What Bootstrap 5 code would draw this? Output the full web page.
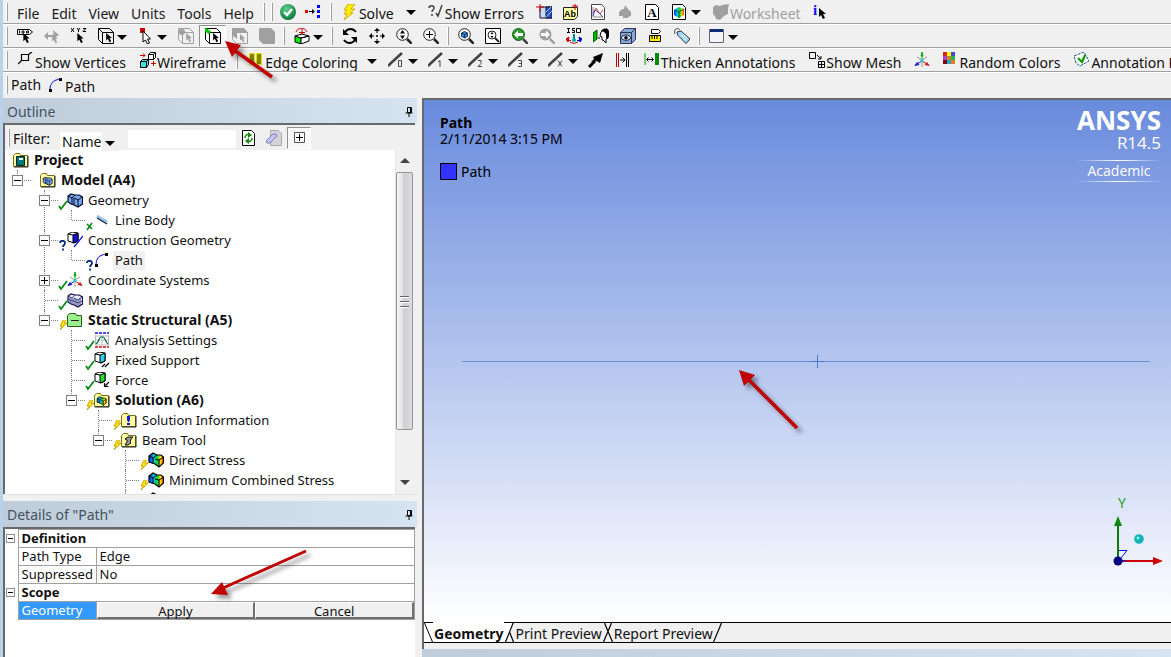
<!DOCTYPE html>
<html lang="en">
<head>
<meta charset="utf-8">
<meta name="viewport" content="width=device-width, initial-scale=1">
<title>Mechanical - Static Structural</title>
<link rel="stylesheet" href="https://cdn.jsdelivr.net/npm/bootstrap@5.3.0/dist/css/bootstrap.min.css">
<style>
  body{font-family:"Noto Sans","Open Sans",sans-serif;font-size:14px;line-height:20px;color:#111;background:#f0f0f0;}
  button,select,input{font:inherit;color:inherit;}
  .app{border-left:3px solid #b9d1ea;}
  svg{display:block;flex:none;}
  .i16{width:16px;height:16px;overflow:visible;}

  /* toolbars */
  .bar{height:24px;border-bottom:1px solid #a0a0a0;border-top:1px solid #fff;white-space:nowrap;}
  .bar-first{border-top:0;}
  .bar-last{height:26px;border-bottom:0;padding-bottom:2px;}
  .grip{width:8px;flex:none;height:18px;padding-left:3px;}
  .grip::before,.rule::before{content:"";display:block;width:2px;height:100%;border-right:1px solid #a0a0a0;border-left:1px solid #fff;}
  .rule{width:8px;flex:none;height:18px;padding-left:3px;}
  .menu-item{padding:4px 6px 0;color:#1a1a1a;text-decoration:none;}
  .tool,.tool-label,.drop{border:0;background:none;padding:0;flex:none;display:flex;align-items:center;height:22px;}
  .tool{width:27px;justify-content:center;}
  .tool-sm{width:24px;}
  .tool-label{padding:0 7px;gap:1px;}
  .tool-label span{padding-top:5px;}
  .tool:disabled,.tool-label:disabled{color:#a0a0a0;}
  .drop{width:16px;margin-left:-3px;padding-left:1px;padding-top:2px;}
  .drop-label{width:18px;margin-left:0;padding-left:2px;}
  .drop-wide{width:20px;margin-left:0;padding-left:5px;}
  .drop::before{content:"";border:5px solid transparent;border-top-color:#000;border-bottom:0;}
  .pressed{background:#f8f8f8;border:1px solid #fff;border-top-color:#909090;border-left-color:#909090;}

  /* docked panels */
  .side{width:414px;flex:none;gap:6px;}
  .dock{background:#fff;border-right:2px solid #f0f0f0;}
  .dock-title{height:26px;background:linear-gradient(90deg,#bfcddb,#d6e4f1);color:#46525e;padding:4px 3px 0 4px;margin-right:-2px;}
  .dock-title h2{font-size:14px;line-height:20px;font-weight:400;margin:0;}
  .dock-body{border-top:2px solid #696969;border-left:2px solid #696969;min-height:0;}
  .outline-dock{flex:1 1 0;min-height:0;border-bottom:1px solid #e3e3e3;}
  .details-dock{height:156px;flex:none;}
  .filter{height:25px;background:#f0f0f0;flex:none;}
  .filter label{width:47px;padding-top:3px;}
  .filter-select{appearance:none;border:0;border-radius:0;width:59px;height:19px;padding:0 0 0 2px;line-height:19px;
    background:#fff linear-gradient(#f0f0f0,#f0f0f0) right/17px 100% no-repeat;}
  .select-wrap{position:relative;margin-top:8px;}
  .select-wrap::after{content:"";position:absolute;right:4px;top:9px;border:5px solid transparent;border-top-color:#000;border-bottom:0;pointer-events:none;}
  .filter-input{width:108px;height:18px;border:0;margin:3px 0 0 9px;}

  .tree,.tree ul{list-style:none;margin:0;padding:0;}
  .tree ul{padding-left:27px;}
  .tree{padding-left:8px;font-size:13px;white-space:nowrap;}
  .tree li{position:relative;}
  .tree ul>li::before{content:"";position:absolute;left:-23px;top:0;bottom:0;border-left:1px dotted #808080;}
  .tree ul>li:last-child::before{bottom:auto;height:10px;}
  .tree ul>li>.node::before{content:"";position:absolute;left:-22px;top:10px;width:13px;border-top:1px dotted #808080;}
  .node{display:flex;align-items:center;height:20px;gap:5px;}
  .node b{font-size:14px;}
  .picked{background:#f0f0f0;padding:0 2px;margin-left:-2px;line-height:19px;}
  .twist{position:absolute;left:-28px;top:5px;width:11px;height:11px;padding:0;border:1px solid #808080;background:#fff;z-index:1;}
  .twist::before{content:"";position:absolute;left:1px;right:1px;top:4px;height:1px;background:#000;}
  .twist-plus::after{content:"";position:absolute;top:1px;bottom:1px;left:4px;width:1px;background:#000;}
  .pic{position:relative;}
  .state{position:absolute;left:-9px;bottom:-3px;width:10px;height:11px;overflow:visible;}

  .scroller{width:20px;padding-right:2px;flex:none;background:#f0f0f0;border-left:1px solid #e3e3e3;}
  .scroller button{border:0;background:none;height:22px;padding:0;display:flex;align-items:center;justify-content:center;}
  .thumb{height:75%;border:1px solid #979797;border-radius:2px;background:linear-gradient(90deg,#f5f5f5,#e6e6e8 35%,#cfcfd3 45%,#dcdcde);}
  .thumb i{display:block;width:9px;height:1px;background:#666;box-shadow:0 1px #fff;}

  .props{width:100%;border-collapse:collapse;table-layout:fixed;font-size:13px;line-height:17px;color:#111;}
  .props th,.props td{border:1px solid #a0a0a0;padding:0 3px;height:18px;}
  .props th{font-weight:400;}
  .props .group{font-weight:700;}
  .props .fold{border-top:0;border-bottom:0;border-left:0;padding:0 0 0 1px;}
  .props .fold button{display:block;position:relative;width:9px;height:9px;border:1px solid #909090;background:#fff;padding:0;}
  .props .fold button::before{content:"";position:absolute;left:1px;right:1px;top:3px;height:1px;background:#000;}
  .col-fold{width:13px;}
  .col-key{width:78px;}
  .props .current{background:#3399ff;color:#fff;}
  .props .actions{padding:0;}
  .push{flex:1 1 0;height:17px;line-height:16px;padding:0;border:1px solid #fff;border-right:2px solid #707070;border-bottom:2px solid #707070;background:#f0f0f0;}

  /* graphics window */
  .scene{margin-left:5px;border-left:2px solid #696969;border-top:2px solid #696969;min-width:0;}
  .canvas{background:linear-gradient(#698bdd,#fff);position:relative;min-height:0;}
  .legend{padding:15px 0 0 16px;line-height:16px;color:#000;}
  .swatch{width:17px;height:17px;background:#3333ff;border:1px solid #000;}
  .brand{position:absolute;top:6px;right:10px;color:#fff;text-align:right;width:84px;font-family:"Open Sans",sans-serif;}
  .brand-name{font-size:26px;line-height:28px;font-weight:700;}
  .brand-rel{font-size:17px;line-height:18px;}
  .brand-tier{text-align:center;margin-top:8px;line-height:20px;border:solid transparent;border-width:1px 0;
    border-image:linear-gradient(90deg,transparent,#fff,transparent) 1;}
  .edge-line{position:absolute;left:38px;right:21px;top:50%;height:1px;background:#6a90d8;}
  .edge-mark{position:absolute;left:50%;top:-6px;margin-left:5px;}
  .triad{position:absolute;right:4px;bottom:51px;}
  .tabs{height:21px;border-top:1px solid #000;border-bottom:1px solid #000;}
  .tabs button{border:0;background:none;padding:1px 0 0;height:20px;line-height:20px;}
  .tabs .active-tab{background:#fff;font-weight:700;margin-top:-1px;padding:2px 0 0 1px;}
  .status{height:8px;margin:6px 0 0 -2px;background:linear-gradient(90deg,#bfcddb,#d6e4f1);}
  .callout{position:absolute;overflow:visible;pointer-events:none;filter:drop-shadow(4px 4px 2px rgba(0,0,0,.4));z-index:5;}
  .callout-edge{left:219px;top:41px;}
  .callout-apply{left:208px;top:49px;}
  .callout-line{left:40%;top:9px;margin-left:2px;}
</style>
</head>
<body class="m-0 overflow-hidden">

<svg width="0" height="0" class="position-absolute" aria-hidden="true">
  <defs>
    <radialGradient id="gGreen" cx=".4" cy=".3" r=".7"><stop offset="0" stop-color="#5fd08a"/><stop offset="1" stop-color="#0b7a3a"/></radialGradient>
    <linearGradient id="gRain" x2="1"><stop offset="0" stop-color="#0030ff"/><stop offset=".35" stop-color="#00c8e0"/><stop offset=".6" stop-color="#20d020"/><stop offset=".8" stop-color="#ffe000"/><stop offset="1" stop-color="#ff2000"/></linearGradient>

    <symbol id="cursor" viewBox="0 0 8 12"><path d="M0 0v9l2-2 2 4 2-1-2-4h3z"/></symbol>
    <symbol id="ok" viewBox="0 0 16 16"><circle cx="8" cy="8" r="8" fill="url(#gGreen)"/><path d="M4 8l3 3 5-6" fill="none" stroke="#fff" stroke-width="2.4"/></symbol>
    <symbol id="branch" viewBox="0 0 16 16"><path d="M0 6h3v3H0z" fill="#e00"/><path d="M4 7.500h4" stroke="#000"/><path d="M7 5l3 2.500L7 10z"/><path d="M12 1h3v3h-3zM12 6h3v3h-3zM12 11h3v3h-3z" fill="#00f"/></symbol>
    <symbol id="bolt" viewBox="0 0 16 16"><path d="M6 0h7L9 5h4L8 9h3L2 16l3-6H2l3-4H2z" fill="#ffee00" stroke="#c8a000" stroke-width=".8"/></symbol>
    <symbol id="qcheck" viewBox="0 0 16 16"><path d="M1 4c0-3 5-3 5 0 0 2-2 2-2 4M4 10v2M8 9l2 3 4-11" fill="none" stroke="#444" stroke-width="1.5"/></symbol>
    <symbol id="section" viewBox="0 0 16 16"><path d="M4 3h12v11H4z" fill="#c8daf5" stroke="#113"/><path d="M10 3h6v11h-6z" fill="#2a55c0" stroke="#113"/><path d="M10 8l5-5M10 13l6-6" stroke="#9cf"/><path d="M0 3h8M4 0v8" stroke="#c00"/></symbol>
    <symbol id="abc" viewBox="0 0 16 16"><path d="M.5 3.500h14v9l-3 3H.5z" fill="#ffffa8" stroke="#222"/><text x="1" y="13" font-size="9" font-weight="700" font-family="Liberation Sans Narrow, Liberation Sans">Ab</text><path d="M9 2h6M12 0v6" stroke="#c00"/></symbol>
    <symbol id="graph" viewBox="0 0 16 16"><path d="M1.500 .5h10l3 3v12h-13z" fill="#fff" stroke="#444"/><path d="M3 3v10h10" fill="none" stroke="#888"/><path d="M3 9l3-5 4 6 3-4" fill="none" stroke="#d44"/><path d="M3 12l2-6 3 2 5 5" fill="none" stroke="#44c"/></symbol>
    <symbol id="blob" viewBox="0 0 16 16"><path d="M2 12V8l3-3h2l1-4 3 4 3 3v4l-3 1v1H6v-2z" fill="#a0a0a0"/></symbol>
    <symbol id="note" viewBox="0 0 16 16"><path d="M1.500 .5h10l3 3v12h-13z" fill="#fff" stroke="#000"/><text x="8" y="13" text-anchor="middle" font-size="13" font-weight="700" font-family="Liberation Serif">A</text></symbol>
    <symbol id="colorcube" viewBox="0 0 16 16"><path d="M1.500 .5h10l3 3v12h-13z" fill="#fff" stroke="#000"/><path d="M3 6l5-3 5 2v6l-5 3-5-3z" fill="url(#gRain)"/><path d="M3 6l5 2 5-3M8 8v6" fill="none" stroke="#063"/></symbol>
    <symbol id="sheet" viewBox="0 0 16 16"><path d="M0 3l3-2 4 1 2-1 7-1-1 5v5l-4 2-4 4-4-1-1-3-2-2z" fill="#a0a0a0"/></symbol>
    <symbol id="info" viewBox="0 0 16 16"><text x="0" y="11" font-size="15" font-weight="700" font-family="Liberation Serif" fill="#11f">i</text><use href="#cursor" x="6" y="4" width="8" height="12"/></symbol>

    <symbol id="tag" viewBox="0 0 16 16"><path d="M.5 1.500h12l3 2.500-3 2.500H.5z" fill="#fff" stroke="#000"/><path d="M2.500 2.500v3M9.500 3h2v2h-2zM5 3h2v2H5z" stroke="#000" fill="none"/><use href="#cursor" x="6" y="5" width="8" height="11"/></symbol>
    <symbol id="dirgray" viewBox="0 0 16 16"><path d="M0 8l4-4v3h7v2H4v3zM9 2l6 5-5 3z" fill="#a0a0a0"/><use href="#cursor" x="8" y="6" width="7" height="10" fill="#a0a0a0"/></symbol>
    <symbol id="xyz" viewBox="0 0 16 16"><path d="M0 0l3 4M3 0L0 4M6 0l1.500 2L9 0M7.500 2v2M12 .5h3l-3 3h3" fill="none" stroke="#000"/><use href="#cursor" x="6" y="5" width="8" height="11"/></symbol>
    <symbol id="boxcur" viewBox="0 0 16 16"><path d="M.5 .5h11l4 4v11h-11l-4-4zM.5 .5l4 4h11M4.500 4.500v11" fill="none" stroke="#000"/><use href="#cursor" x="8" y="5" width="7" height="10"/></symbol>
    <symbol id="pick" viewBox="0 0 16 16"><path d="M2 0h5v5H2z" fill="#c00"/><path d="M5 3v11l2.500-2 2 4 2-1-2-4h3z" fill="#fff" stroke="#000"/></symbol>
    <symbol id="vgray" viewBox="0 0 16 16"><path d="M.5 .5h11l4 4v11h-11l-4-4zM.5 .5l4 4h11M4.500 4.500v11" fill="none" stroke="#a0a0a0"/><circle cx="4" cy="4" r="3" fill="#a0a0a0"/><use href="#cursor" x="8" y="5" width="7" height="10" fill="#a0a0a0"/></symbol>
    <symbol id="edge" viewBox="0 0 16 16"><path d="M.5 .5h11l4 4v11h-11l-4-4zM.5 .5l4 4h11M4.500 4.500v11" fill="#fff" stroke="#000"/><path d="M0 1l5 4" stroke="#0c0" stroke-width="3.500"/><use href="#cursor" x="8" y="5" width="7" height="10"/></symbol>
    <symbol id="facegray" viewBox="0 0 16 16"><path d="M.5 .5h11l4 4v11h-11l-4-4z" fill="none" stroke="#a0a0a0"/><path d="M0 0h12l4 5H5v6l-5-4z" fill="#a0a0a0"/><use href="#cursor" x="8" y="6" width="6" height="9" fill="#a0a0a0"/></symbol>
    <symbol id="bodygray" viewBox="0 0 16 16"><path d="M0 1l1-1h11l4 4v11l-1 1H4l-4-4z" fill="#a0a0a0"/></symbol>
    <symbol id="extend" viewBox="0 0 16 16"><path d="M1 8l6 2v6l-6-2z" fill="#0e0" stroke="#000"/><path d="M7 10l8-2v5l-8 3zM1 8l7-2 7 2-8 2z" fill="#fff" stroke="#000"/><path d="M2 4c2-5 9-5 11 0M8 1v6M5 4.500h6" fill="none" stroke="#c00"/></symbol>
    <symbol id="rotate" viewBox="0 0 16 16"><path d="M3 4c3-4 8-4 11 0M13 12c-3 4-8 4-11 0" fill="none" stroke="#000" stroke-width="2"/><path d="M1 1v6h6zM15 15V9H9z"/></symbol>
    <symbol id="pan" viewBox="0 0 16 16"><path d="M8 2v12M2 8h12" stroke="#000" stroke-dasharray="3 2 2 2 3"/><path d="M8 0l3 3H5zM8 16l3-3H5zM0 8l3-3v6zM16 8l-3-3v6z"/></symbol>
    <symbol id="glass" viewBox="0 0 16 16"><circle cx="6.500" cy="6.500" r="5.800" fill="#fff" stroke="#222"/><path d="M11 11l5 5" stroke="#222" stroke-width="2.500"/></symbol>
    <symbol id="zoom" viewBox="0 0 16 16"><use href="#glass" width="16" height="16"/><path d="M6.500 2L9 5.500H4zM6.500 11L9 7.500H4z"/></symbol>
    <symbol id="zoomplus" viewBox="0 0 16 16"><use href="#glass" width="16" height="16"/><path d="M3 6.500h7M6.500 3v7" stroke="#000"/></symbol>
    <symbol id="zoomfit" viewBox="0 0 16 16"><use href="#glass" width="16" height="16"/><path d="M3.500 5l3-1.500 3 1.500v3.500l-3 1.500-3-1.500z" fill="#3a80e8" stroke="#023" stroke-width=".8"/><path d="M3.500 5l3 1.500 3-1.500M6.500 6.500V10" fill="none" stroke="#023" stroke-width=".8"/></symbol>
    <symbol id="zoombox" viewBox="0 0 16 16"><path d="M.5 .5h15v15H.5z" fill="#fff" stroke="#000"/><circle cx="7" cy="7" r="4" fill="none" stroke="#222"/><path d="M10 10l4 4" stroke="#222" stroke-width="2"/><path d="M7 4l1.500 2h-3zM7 10l1.500-2h-3z"/></symbol>
    <symbol id="zoomprev" viewBox="0 0 16 16"><path d="M11 11l5 5" stroke="#444" stroke-width="2.500"/><circle cx="6.500" cy="6.500" r="6" fill="#2c9a2c" stroke="#176017"/><path d="M2 6.500l4-4V5h5v3H6v2.500z" fill="#fff"/></symbol>
    <symbol id="zoomnext" viewBox="0 0 16 16"><path d="M11 11l5 5" stroke="#a0a0a0" stroke-width="2.500"/><circle cx="6.500" cy="6.500" r="6" fill="#a0a0a0"/><path d="M11 6.500l-4-4V5H2v3h5v2.500z" fill="#fff"/></symbol>
    <symbol id="iso" viewBox="0 0 16 16"><path d="M1 .5h3M1 4.500h3M2.500 0v4M10.500 .5h4v4h-4zM9 .5H6.500V2.500h2v2H6" fill="none" stroke="#000"/><path d="M8 6v6" stroke="#088" stroke-width="2"/><circle cx="8" cy="12" r="2" fill="#0aa"/><path d="M5 12.500H2M3 9l-3 2 2 3z" stroke="#c00" fill="#c00"/><path d="M11 12.500h3M13 9l3 2-2 3z" stroke="#00c" fill="#00c"/><path d="M4 14l4 1.500 4-1.500" stroke="#c00" fill="none"/></symbol>
    <symbol id="lookat" viewBox="0 0 16 16"><path d="M0 5l4-3v9l-4 3z" fill="#0b0" stroke="#040"/><path d="M5 10h2" stroke="#000"/><path d="M8 4l3-3h3l2 3-1 6-2 1v4l-3-3H9V9L7 8z" fill="#fff" stroke="#000"/><path d="M8 3l2-2h5l1 4-1 6-2-1V6l-2-2z"/></symbol>
    <symbol id="eye" viewBox="0 0 16 16"><path d="M.5 4.500l4-4h11v11l-4 4H.5z" fill="#88a8d8" stroke="#335"/><path d="M.5 4.500h11v11M11.500 4.500l4-4" fill="none" stroke="#335"/><path d="M1 10c2-4 8-4 10 0-2 3-8 3-10 0z" fill="#dfe8f8" stroke="#123"/><circle cx="6" cy="9.800" r="1.800"/></symbol>
    <symbol id="ruler" viewBox="0 0 16 16"><path d="M4.500 1.500h7l2 2-2 2h-7z" fill="#fff" stroke="#000"/><path d="M2.500 7.500h11v6h-11z" fill="#ffee00" stroke="#000"/><path d="M5 8v3M7.500 8v3M10 8v3" stroke="#000"/></symbol>
    <symbol id="label" viewBox="0 0 16 16"><path d="M3 4l4-1 9 8-4 4.500-8-8z" fill="#9fd8f5" stroke="#334"/><path d="M1 6c-2-5 3-7 5-4" fill="none" stroke="#444"/><path d="M7 7l5 5M9 6l4 4" stroke="#fff"/></symbol>
    <symbol id="window" viewBox="0 0 16 16"><path d="M.5 1.500h14v13H.5z" fill="#f4f4f8" stroke="#667"/><path d="M1 1h13v3H1z" fill="#112a77"/></symbol>

    <symbol id="vert" viewBox="0 0 16 16"><path d="M3.500 2.500h7v6h-7zM10.500 2.500L14 0M3.500 8.500L0 12" fill="none" stroke="#000" stroke-width="1.200"/></symbol>
    <symbol id="wire" viewBox="0 0 16 16"><path d="M8.500 2.500l2-2h5v5l-2 2h-5zM8.500 2.500h5v5M13.500 2.500l2-2" fill="#fff" stroke="#000"/><path d="M.5 9.500l2-2h6v5l-2 3h-6z" fill="#3fe0e0" stroke="#000"/><path d="M.5 9.500h6v6M6.500 9.500l2-2" fill="none" stroke="#000"/><path d="M0 3.500h5M3 1.500l2 2-2 2M11 11.500h5M13.500 9v5" fill="none" stroke="#c00"/></symbol>
    <symbol id="ecolor" viewBox="0 0 16 16"><path d="M1.500 1.500h5v11h-5zM8.500 1.500h5v11h-5z" fill="#858500" stroke="#e8e000"/></symbol>
    <symbol id="slash" viewBox="0 0 16 16"><path d="M0 14l3-3L14 1" fill="none" stroke="#444" stroke-width="2.500"/></symbol>
    <symbol id="barrow" viewBox="0 0 16 16"><path d="M1 15l6-6" stroke="#000" stroke-width="3"/><path d="M15 1l-3 10-3-2-6 1 3-3-1-2z"/></symbol>
    <symbol id="gapin" viewBox="0 0 16 16"><path d="M1.500 1v14M3.500 1v14" stroke="#b00"/><path d="M11.500 1v14M13.500 1v14" stroke="#000"/><path d="M5 8h4M7.500 5.500L10 8l-2.500 2.500" fill="none" stroke="#000"/></symbol>
    <symbol id="thick" viewBox="0 0 16 16"><path d="M1 1v12" stroke="#0a0"/><path d="M11 1h4v12h-4z" fill="#0a8a0a"/><path d="M3 7.500h6M4.500 5.500l-2 2 2 2M7.500 5.500l2 2-2 2" fill="none" stroke="#000"/></symbol>
    <symbol id="showmesh" viewBox="0 0 16 16"><path d="M.5 .5h6v6h-6zM9.500 9.500h6v6h-6zM12.500 9.500v6M9.500 12.500h6M8 3l4 4M12 4v3H9" fill="none" stroke="#000"/></symbol>
    <symbol id="csys" viewBox="0 0 16 16"><path d="M8 8V3M7 4l1-4 1 4z" stroke="#1a2" fill="#1a2"/><path d="M8 9l-5 3M1 13.500l2-3 2 2z" stroke="#22c" fill="#22c"/><path d="M8 9l5 3M15 13.500l-4-1 2-2z" stroke="#c22" fill="#c22"/><path d="M8 9v6M8 8L3 5M8 8l5-3" stroke="#999" fill="none"/><circle cx="8" cy="8.500" r="1.500" fill="#2cc"/></symbol>
    <symbol id="swatches" viewBox="0 0 16 16"><path d="M1 0h4v4H1z" fill="#d22"/><path d="M5 0h4v4H5z" fill="#ff0"/><path d="M9 0h4v4H9z" fill="#44d"/><path d="M1 4h4v4H1z" fill="#a4c"/><path d="M5 4h4v4H5z" fill="#c82"/><path d="M9 4h4v4H9z" fill="#2b4"/><path d="M1 8h4v4H1z" fill="#800"/><path d="M5 8h4v4H5z" fill="#2ac"/><path d="M9 8h4v4H9z" fill="#e72"/></symbol>
    <symbol id="anno" viewBox="0 0 16 16"><path d="M0 4l10-4 5 9-9 5-4-3z" fill="#fff" stroke="#258" stroke-dasharray="3 1"/><path d="M4 6l4 4 3-7" fill="none" stroke="#190" stroke-width="2.200"/></symbol>
    <symbol id="path" viewBox="0 0 16 16"><path d="M2 13C2 6 5 3 12 2" fill="none" stroke="#11d" stroke-width="1.100"/><path d="M1 12h3v3H1zM11 1h3v3h-3z"/></symbol>

    <symbol id="folder" viewBox="0 0 16 16"><path d="M.5 3.500l2-2h4l1 2h7v11H.5z" fill="#ffff9c" stroke="#776f20"/><path d="M15 4v11H1" fill="none" stroke="#222"/></symbol>
    <symbol id="t-proj" viewBox="0 0 16 16"><use href="#folder" width="16" height="16"/><path d="M3.500 4.500h8v9h-8z" fill="#077" stroke="#022"/><path d="M6 6h4v2H6z" fill="#fff"/></symbol>
    <symbol id="cubes" viewBox="0 0 16 16"><path d="M1 4l3-2 4 1 4 0 3.500 2v7L11 15l-4-2-3-1-3-2z" fill="#7aa2ee" stroke="#012" stroke-width="1.200"/><path d="M1 4l4 2 3-3M5 6v6M7 6l4 2 4-3M11 8v7M7 6v7" fill="none" stroke="#012"/></symbol>
    <symbol id="t-model" viewBox="0 0 16 16"><use href="#folder" width="16" height="16"/><use href="#cubes" x="2" y="4" width="11" height="10"/></symbol>
    <symbol id="t-line" viewBox="0 0 16 16"><path d="M3 4l10 6" stroke="#9ac4ee" stroke-width="3"/><path d="M3 6l10 6" stroke="#124" stroke-width="1.300"/></symbol>
    <symbol id="t-cgeom" viewBox="0 0 16 16"><path d="M1 2l4-2 6 1v8l-4 2-6-2z" fill="#fff" stroke="#000"/><path d="M6 3l5-2v8l-5 2z" fill="#11d" stroke="#000"/><path d="M1 2l5 1" stroke="#000"/><path d="M7 15l9-11" stroke="#11d" stroke-width="1.300"/></symbol>
    <symbol id="t-mesh" viewBox="0 0 16 16"><path d="M1 4l3-2 4 1 4 0 3.500 2v7L11 15l-4-2-3-1-3-2z" fill="#e8ecff" stroke="#114" stroke-width="1.200"/><path d="M1 4l4 2 3-3M5 6v6M7 6l4 2 4-3M11 8v7M7 6v7M1 7l4 2 2 0 4 2 4-2M3 5v6M9 7v7M13 6v8" fill="none" stroke="#226" stroke-width=".8"/></symbol>
    <symbol id="t-static" viewBox="0 0 16 16"><path d="M.5 3.500l2-2h6l1 2h5v11H.5z" fill="#9cf08c" stroke="#285c20"/><path d="M4 8.500h8" stroke="#222"/></symbol>
    <symbol id="t-aset" viewBox="0 0 16 16"><path d="M1.500 3v10h13V3M8 3v10M2 8h12M1 4h14" stroke="#bbb" fill="none"/><path d="M2 12c3-2 3-7 5-7h2c2 0 3 6 5 7" fill="none" stroke="#064" stroke-width="1.200"/><path d="M1 1h14" stroke="#11d" stroke-width="1.500" stroke-dasharray="3 1"/><path d="M1 15h14" stroke="#c11" stroke-width="1.500" stroke-dasharray="3 1"/></symbol>
    <symbol id="t-fixed" viewBox="0 0 16 16"><path d="M1 2l4-2 6 1v8l-4 2-6-2z" fill="#fff" stroke="#000"/><path d="M6 3l5-2v8l-5 2z" fill="#3ce" stroke="#000"/><path d="M1 2l5 1M8 15l3-3M11 15l4-4" stroke="#000" stroke-width="1.200"/></symbol>
    <symbol id="t-force" viewBox="0 0 16 16"><path d="M1 2l4-2 6 1v8l-4 2-6-2z" fill="#fff" stroke="#000"/><path d="M6 3l5-2v8l-5 2z" fill="#2d3" stroke="#000"/><path d="M1 2l5 1M15 10l-4 4M10.500 11v3.500h4" fill="none" stroke="#000" stroke-width="1.200"/></symbol>
    <symbol id="t-stress" viewBox="0 0 16 16"><path d="M1 4l4-3 4 2h4l2.500 2v6L11 15l-4-3-6-2z" fill="url(#gRain)" stroke="#000" stroke-width="1.200"/><path d="M1 4l4 2 4-3M5 6v5M7 7l4 1 5-3M11 8v7" fill="none" stroke="#000"/></symbol>
    <symbol id="t-soln" viewBox="0 0 16 16"><use href="#folder" width="16" height="16"/><use href="#t-stress" x="2" y="4" width="11" height="10"/></symbol>
    <symbol id="t-info" viewBox="0 0 16 16"><use href="#folder" width="16" height="16"/><path d="M6 4h3v4l-1 2H7L6 8zM6 11h3v2H6z" fill="#11d"/></symbol>
    <symbol id="t-beam" viewBox="0 0 16 16"><use href="#folder" width="16" height="16"/><path d="M4 7l3-2h5l-2 2-1 3 1 1-3 2H4l2-3V8z" fill="#999" stroke="#111"/></symbol>
    <symbol id="s-ok" viewBox="0 0 10 11"><path d="M1 6l2 3 6-8" fill="none" stroke="#0a8a1a" stroke-width="1.800"/></symbol>
    <symbol id="s-x" viewBox="0 0 10 11"><path d="M2 4l5 5M7 3L2 10" fill="none" stroke="#0a8a1a" stroke-width="1.700"/></symbol>
    <symbol id="s-bolt" viewBox="0 0 10 11"><path d="M5 0l4-1-3 4h3L2 10l2-4H2z" fill="#ffe000" stroke="#b89000" stroke-width=".7"/></symbol>
    <symbol id="s-q" viewBox="0 0 10 11"><path d="M2 3c0-3 5-3 5 0 0 2-2 2-2 4M5 8.500v2" fill="none" stroke="#0a2a7a" stroke-width="1.800"/></symbol>
    <symbol id="pin" viewBox="0 0 10 12"><path d="M3.500 1.500h4v5h-4zM1.500 7h7M5 7v4M6.500 1v6" fill="none" stroke="#000"/></symbol>
    <symbol id="refresh" viewBox="0 0 16 16"><path d="M2.500 .5h9l3 3v12h-12z" fill="#fff" stroke="#000"/><path d="M5 8c0-3 2-4 4-3M12 8c0 3-2 4-4 3" fill="none" stroke="#180" stroke-width="1.500"/><path d="M8 2l4 3-4 3zM9 8v6l-4-3z" fill="#180"/></symbol>
    <symbol id="eraser" viewBox="0 0 16 16"><path d="M4.500 .5h8l3 3v12h-11z" fill="#d4d4d8" stroke="#aaa"/><path d="M0 11l7-7h3l1 2-7 7H1z" fill="#c4c4f4" stroke="#7780b0"/></symbol>
    <symbol id="plusbox" viewBox="0 0 11 11"><path d="M.5 .5h10v10H.5z" fill="#fff" stroke="#555"/><path d="M2 5.500h7M5.500 2v7" stroke="#000"/></symbol>
  </defs>
</svg>

<div class="app vh-100 d-flex flex-column position-relative">

  <header>
    <div class="bar bar-first d-flex align-items-center">
      <span class="grip"></span>
      <nav class="d-flex" aria-label="Main menu">
        <a class="menu-item" href="#">File</a><a class="menu-item" href="#">Edit</a><a class="menu-item" href="#">View</a><a class="menu-item" href="#">Units</a><a class="menu-item" href="#">Tools</a><a class="menu-item" href="#">Help</a>
      </nav>
      <span class="rule"></span><span class="grip"></span>
      <button class="tool tool-sm" aria-label="Complete"><svg class="i16"><use href="#ok"/></svg></button>
      <button class="tool" aria-label="Connections"><svg class="i16"><use href="#branch"/></svg></button>
      <span class="rule"></span>
      <button class="tool-label"><svg class="i16"><use href="#bolt"/></svg><span>Solve</span></button><button class="drop drop-wide" aria-label="Solve options"></button>
      <button class="tool-label"><svg class="i16"><use href="#qcheck"/></svg><span>Show Errors</span></button>
      <button class="tool" aria-label="Section plane"><svg class="i16"><use href="#section"/></svg></button>
      <button class="tool" aria-label="Comment"><svg class="i16"><use href="#abc"/></svg></button>
      <button class="tool" aria-label="Chart"><svg class="i16"><use href="#graph"/></svg></button>
      <button class="tool" aria-label="Symbol" disabled><svg class="i16"><use href="#blob"/></svg></button>
      <button class="tool" aria-label="Annotation text"><svg class="i16"><use href="#note"/></svg></button>
      <button class="tool" aria-label="Figure"><svg class="i16"><use href="#colorcube"/></svg></button><button class="drop" aria-label="Figure options"></button>
      <button class="tool-label" disabled><svg class="i16"><use href="#sheet"/></svg><span>Worksheet</span></button>
      <button class="tool" aria-label="Selection information"><svg class="i16"><use href="#info"/></svg></button>
    </div>

    <div class="bar d-flex align-items-center">
      <span class="grip"></span>
      <button class="tool" aria-label="Label"><svg class="i16"><use href="#tag"/></svg></button>
      <button class="tool" aria-label="Direction" disabled><svg class="i16"><use href="#dirgray"/></svg></button>
      <button class="tool" aria-label="Coordinates"><svg class="i16"><use href="#xyz"/></svg></button>
      <button class="tool" aria-label="Select type"><svg class="i16"><use href="#boxcur"/></svg></button><button class="drop" aria-label="Select type options"></button>
      <button class="tool" aria-label="Select mode"><svg class="i16"><use href="#pick"/></svg></button><button class="drop" aria-label="Select mode options"></button>
      <button class="tool" aria-label="Vertex" disabled><svg class="i16"><use href="#vgray"/></svg></button>
      <button class="tool pressed" aria-label="Edge"><svg class="i16"><use href="#edge"/></svg></button>
      <button class="tool" aria-label="Face" disabled><svg class="i16"><use href="#facegray"/></svg></button>
      <button class="tool" aria-label="Body" disabled><svg class="i16"><use href="#bodygray"/></svg></button>
      <span class="rule"></span>
      <button class="tool" aria-label="Extend"><svg class="i16"><use href="#extend"/></svg></button><button class="drop" aria-label="Extend options"></button>
      <span class="rule"></span>
      <button class="tool" aria-label="Rotate"><svg class="i16"><use href="#rotate"/></svg></button>
      <button class="tool" aria-label="Pan"><svg class="i16"><use href="#pan"/></svg></button>
      <button class="tool" aria-label="Zoom"><svg class="i16"><use href="#zoom"/></svg></button>
      <button class="tool" aria-label="Box zoom"><svg class="i16"><use href="#zoomplus"/></svg></button>
      <span class="rule"></span>
      <button class="tool" aria-label="Zoom to fit"><svg class="i16"><use href="#zoomfit"/></svg></button>
      <button class="tool" aria-label="Magnifier"><svg class="i16"><use href="#zoombox"/></svg></button>
      <button class="tool" aria-label="Previous view"><svg class="i16"><use href="#zoomprev"/></svg></button>
      <button class="tool" aria-label="Next view" disabled><svg class="i16"><use href="#zoomnext"/></svg></button>
      <button class="tool" aria-label="Isometric"><svg class="i16"><use href="#iso"/></svg></button>
      <button class="tool" aria-label="Look at"><svg class="i16"><use href="#lookat"/></svg></button>
      <button class="tool" aria-label="Manage views"><svg class="i16"><use href="#eye"/></svg></button>
      <button class="tool" aria-label="Ruler"><svg class="i16"><use href="#ruler"/></svg></button>
      <button class="tool" aria-label="Tags"><svg class="i16"><use href="#label"/></svg></button>
      <span class="rule"></span>
      <button class="tool" aria-label="Viewports"><svg class="i16"><use href="#window"/></svg></button><button class="drop" aria-label="Viewport options"></button>
    </div>

    <div class="bar d-flex align-items-center overflow-hidden">
      <span class="grip"></span>
      <button class="tool-label"><svg class="i16"><use href="#vert"/></svg><span>Show Vertices</span></button>
      <button class="tool-label"><svg class="i16"><use href="#wire"/></svg><span>Wireframe</span></button>
      <span class="rule"></span>
      <button class="tool-label"><svg class="i16"><use href="#ecolor"/></svg><span>Edge Coloring</span></button><button class="drop drop-label" aria-label="Edge coloring options"></button>
      <button class="tool" aria-label="Free edges"><svg class="i16"><use href="#slash"/><path d="M10.500 8.500h3v6h-3z" fill="none" stroke="#444"/></svg></button><button class="drop" aria-label="Free edge options"></button>
      <button class="tool" aria-label="Single edges"><svg class="i16"><use href="#slash"/><path d="M10 10l2-1.500V15" fill="none" stroke="#444"/></svg></button><button class="drop" aria-label="Single edge options"></button>
      <button class="tool" aria-label="Double edges"><svg class="i16"><use href="#slash"/><path d="M10 8.500h3v3l-3 3h4" fill="none" stroke="#444"/></svg></button><button class="drop" aria-label="Double edge options"></button>
      <button class="tool" aria-label="Triple edges"><svg class="i16"><use href="#slash"/><path d="M10 8.500h3.500v6H10M11 11.500h3" fill="none" stroke="#444"/></svg></button><button class="drop" aria-label="Triple edge options"></button>
      <button class="tool" aria-label="Multiple edges"><svg class="i16"><use href="#slash"/><path d="M10 8.500l4 6M14 8.500l-4 6" fill="none" stroke="#444"/></svg></button><button class="drop" aria-label="Multiple edge options"></button>
      <button class="tool" aria-label="Edge direction"><svg class="i16"><use href="#barrow"/></svg></button>
      <button class="tool" aria-label="Connection gap"><svg class="i16"><use href="#gapin"/></svg></button>
      <button class="tool-label"><svg class="i16"><use href="#thick"/></svg><span>Thicken Annotations</span></button>
      <button class="tool-label"><svg class="i16"><use href="#showmesh"/></svg><span>Show Mesh</span></button>
      <button class="tool" aria-label="Coordinate systems"><svg class="i16"><use href="#csys"/></svg></button>
      <button class="tool-label"><svg class="i16"><use href="#swatches"/></svg><span>Random Colors</span></button>
      <button class="tool-label"><svg class="i16"><use href="#anno"/></svg><span>Annotation Preferences</span></button>
    </div>

    <div class="bar bar-last d-flex align-items-center">
      <span class="grip"></span>
      <span>Path</span>
      <button class="tool-label"><svg class="i16"><use href="#path"/></svg><span>Path</span></button>
    </div>
    <svg class="callout callout-edge" width="48" height="37"><path d="M50 36L12 9" stroke="#c00000" stroke-width="3.500"/><path d="M3 0l16 4-9 12z" fill="#c00000"/></svg>
  </header>

  <main class="d-flex flex-grow-1 overflow-hidden">
    <div class="side d-flex flex-column">

      <section class="dock outline-dock d-flex flex-column">
        <div class="dock-title d-flex justify-content-between align-items-start"><h2>Outline</h2><svg class="mt-1" width="10" height="12"><use href="#pin"/></svg></div>
        <div class="dock-body d-flex flex-column flex-grow-1">
          <div class="filter d-flex align-items-center">
            <span class="grip"></span>
            <label for="filterBy">Filter:</label>
            <div class="select-wrap"><select id="filterBy" class="filter-select"><option>Name</option></select></div>
            <input class="filter-input" type="text" aria-label="Filter text">
            <button class="tool tool-sm" aria-label="Refresh"><svg class="i16"><use href="#refresh"/></svg></button>
            <button class="tool" aria-label="Clear"><svg class="i16"><use href="#eraser"/></svg></button>
            <button class="tool tool-sm pressed" aria-label="Expand all"><svg width="11" height="11"><use href="#plusbox"/></svg></button>
          </div>
          <div class="d-flex flex-grow-1 overflow-hidden">
            <div class="flex-grow-1 overflow-hidden">
            <ul class="tree">
              <li><div class="node"><span class="pic"><svg class="i16"><use href="#t-proj"/></svg></span><b>Project</b></div>
              <ul>
                <li><button class="twist" aria-label="Collapse"></button><div class="node"><span class="pic"><svg class="i16"><use href="#t-model"/></svg></span><b>Model (A4)</b></div>
                <ul>
                  <li><button class="twist" aria-label="Collapse"></button><div class="node"><span class="pic"><svg class="i16"><use href="#cubes"/></svg><svg class="state"><use href="#s-ok"/></svg></span>Geometry</div>
                    <ul><li><div class="node"><span class="pic"><svg class="i16"><use href="#t-line"/></svg><svg class="state"><use href="#s-x"/></svg></span>Line Body</div></li></ul></li>
                  <li><button class="twist" aria-label="Collapse"></button><div class="node"><span class="pic"><svg class="i16"><use href="#t-cgeom"/></svg><svg class="state"><use href="#s-q"/></svg></span>Construction Geometry</div>
                    <ul><li><div class="node"><span class="pic"><svg class="i16"><use href="#path"/></svg><svg class="state"><use href="#s-q"/></svg></span><span class="picked">Path</span></div></li></ul></li>
                  <li><button class="twist twist-plus" aria-label="Expand"></button><div class="node"><span class="pic"><svg class="i16"><use href="#csys"/></svg><svg class="state"><use href="#s-ok"/></svg></span>Coordinate Systems</div></li>
                  <li><div class="node"><span class="pic"><svg class="i16"><use href="#t-mesh"/></svg><svg class="state"><use href="#s-ok"/></svg></span>Mesh</div></li>
                  <li><button class="twist" aria-label="Collapse"></button><div class="node"><span class="pic"><svg class="i16"><use href="#t-static"/></svg><svg class="state"><use href="#s-bolt"/></svg></span><b>Static Structural (A5)</b></div>
                    <ul>
                      <li><div class="node"><span class="pic"><svg class="i16"><use href="#t-aset"/></svg><svg class="state"><use href="#s-ok"/></svg></span>Analysis Settings</div></li>
                      <li><div class="node"><span class="pic"><svg class="i16"><use href="#t-fixed"/></svg><svg class="state"><use href="#s-ok"/></svg></span>Fixed Support</div></li>
                      <li><div class="node"><span class="pic"><svg class="i16"><use href="#t-force"/></svg><svg class="state"><use href="#s-ok"/></svg></span>Force</div></li>
                      <li><button class="twist" aria-label="Collapse"></button><div class="node"><span class="pic"><svg class="i16"><use href="#t-soln"/></svg><svg class="state"><use href="#s-bolt"/></svg></span><b>Solution (A6)</b></div>
                        <ul>
                          <li><div class="node"><span class="pic"><svg class="i16"><use href="#t-info"/></svg><svg class="state"><use href="#s-bolt"/></svg></span>Solution Information</div></li>
                          <li><button class="twist" aria-label="Collapse"></button><div class="node"><span class="pic"><svg class="i16"><use href="#t-beam"/></svg><svg class="state"><use href="#s-bolt"/></svg></span>Beam Tool</div>
                            <ul>
                              <li><div class="node"><span class="pic"><svg class="i16"><use href="#t-stress"/></svg><svg class="state"><use href="#s-bolt"/></svg></span>Direct Stress</div></li>
                              <li><div class="node"><span class="pic"><svg class="i16"><use href="#t-stress"/></svg><svg class="state"><use href="#s-bolt"/></svg></span>Minimum Combined Stress</div></li>
                              <li><div class="node"><span class="pic"><svg class="i16"><use href="#t-stress"/></svg></span>Maximum Combined Stress</div></li>
                            </ul></li>
                        </ul></li>
                    </ul></li>
                </ul></li>
              </ul></li>
            </ul>
            </div>
            <div class="scroller d-flex flex-column">
              <button aria-label="Scroll up"><svg width="10" height="6"><path d="M5 0l5 5H0z" fill="#444"/></svg></button>
              <div class="thumb d-flex flex-column align-items-center justify-content-center gap-1"><i></i><i></i><i></i></div>
              <button class="mt-auto" aria-label="Scroll down"><svg width="10" height="6"><path d="M0 0h10L5 5z" fill="#444"/></svg></button>
            </div>
          </div>
        </div>
      </section>

      <section class="dock details-dock d-flex flex-column position-relative">
        <div class="dock-title d-flex justify-content-between align-items-start"><h2>Details of "Path"</h2><svg class="mt-1" width="10" height="12"><use href="#pin"/></svg></div>
        <div class="dock-body flex-grow-1">
          <table class="props">
            <colgroup><col class="col-fold"><col class="col-key"><col></colgroup>
            <tbody>
              <tr><td class="fold"><button aria-label="Collapse Definition"></button></td><th class="group" colspan="2">Definition</th></tr>
              <tr><td class="fold"></td><th>Path Type</th><td>Edge</td></tr>
              <tr><td class="fold"></td><th>Suppressed</th><td>No</td></tr>
              <tr><td class="fold"><button aria-label="Collapse Scope"></button></td><th class="group" colspan="2">Scope</th></tr>
              <tr><td class="fold"></td><th class="current">Geometry</th><td class="actions"><div class="d-flex"><button class="push">Apply</button><button class="push">Cancel</button></div></td></tr>
            </tbody>
          </table>
        </div>
        <svg class="callout callout-apply" width="96" height="46"><path d="M95 1L12 38" stroke="#c00000" stroke-width="3"/><path d="M0 44l11-12 6 13z" fill="#c00000"/></svg>
      </section>
    </div>

    <section class="scene d-flex flex-column flex-grow-1">
      <div class="canvas flex-grow-1 overflow-hidden">
        <div class="legend">
          <b class="d-block">Path</b>
          <div>2/11/2014 3:15 PM</div>
          <div class="d-flex align-items-center gap-1 mt-3"><span class="swatch"></span>Path</div>
        </div>
        <div class="brand">
          <div class="brand-name">ANSYS</div>
          <div class="brand-rel">R14.5</div>
          <div class="brand-tier">Academic</div>
        </div>
        <div class="edge-line">
          <svg class="edge-mark" width="13" height="13"><path d="M0 6.500h13M6.500 0v13" stroke="#4a78cc"/></svg>
          <svg class="callout callout-line" width="60" height="60"><path d="M58 58L10 10" stroke="#c00000" stroke-width="3.500"/><path d="M0 0l16 5L5 16z" fill="#c00000"/></svg>
        </div>
        <svg class="triad" width="54" height="76" font-family="Open Sans, sans-serif">
          <text x="5" y="13" font-size="14" fill="#1a9a1a">Y</text>
          <path d="M5 66V27" stroke="#0a7a0a" stroke-width="2"/><path d="M5 21l4 10H1z" fill="#0a8a0a"/>
          <path d="M5 66h38" stroke="#c00" stroke-width="2"/><path d="M50 66l-10-4v8z" fill="#c00"/>
          <path d="M6 55.500h8L8 63M9 66h5" stroke="#11e" fill="none"/>
          <circle cx="5" cy="66" r="4.500" fill="#000080"/>
          <circle cx="26" cy="44" r="4.800" fill="#14b4b4"/><circle cx="25" cy="43" r="1.500" fill="#7fe"/>
        </svg>
      </div>
      <div class="tabs d-flex" role="tablist">
        <svg width="9" height="19" style="background:#fff"><path d="M.5 0L8.500 19" stroke="#000"/></svg>
        <button class="active-tab" role="tab">Geometry</button>
        <svg width="12" height="19"><path d="M0 0h9L2 19H0z" fill="#fff"/><path d="M9.500 -1L1.500 19M5.500 9l4 10" stroke="#000" stroke-width="1.200"/></svg>
        <button role="tab">Print Preview</button>
        <svg width="12" height="19"><path d="M9.500 0L1.500 19M2.500 0l8 19" stroke="#000" stroke-width="1.200"/></svg>
        <button role="tab">Report Preview</button>
        <svg width="12" height="19"><path d="M8.500 0L.5 19" stroke="#000" stroke-width="1.200"/></svg>
      </div>
      <div class="status"></div>
    </section>
  </main>
</div>
<script src="https://cdn.jsdelivr.net/npm/bootstrap@5.3.0/dist/js/bootstrap.bundle.min.js"></script>
</body>
</html>
